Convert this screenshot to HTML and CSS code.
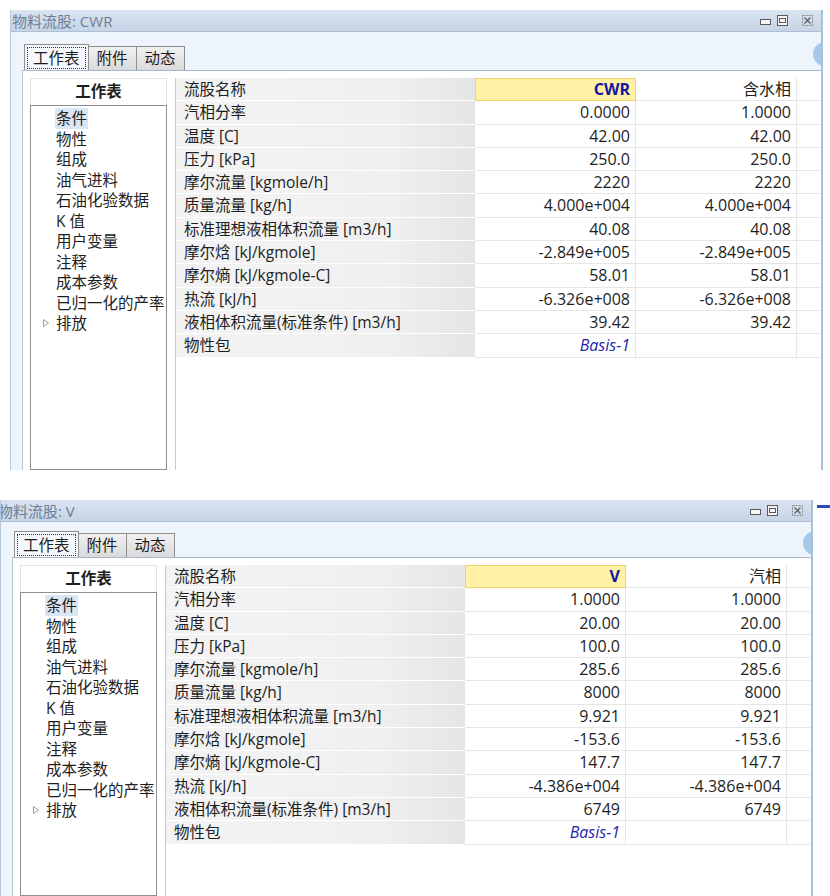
FILE: index.html
```html
<!DOCTYPE html>
<html lang="zh-CN">
<head>
<meta charset="utf-8">
<title>物料流股</title>
<link rel="stylesheet" href="styles.css">
</head>
<body>
<section class="window win-cwr">
  <header class="titlebar">
    <span class="title">物料流股: CWR</span>
    <div class="controls">
      <svg class="ctl ctl-min" width="11" height="11" viewBox="0 0 11 11"><rect x="0.5" y="4.5" width="10" height="5" fill="#f6f6f6" stroke="#5a5a5a"/></svg>
      <svg class="ctl ctl-max" width="11" height="11" viewBox="0 0 11 11"><rect x="0.5" y="0.5" width="10" height="10" fill="#f6f6f6" stroke="#5a5a5a"/><rect x="2.5" y="3.5" width="6" height="4" fill="none" stroke="#5a5a5a"/></svg>
      <svg class="ctl ctl-close" width="11" height="11" viewBox="0 0 11 11"><rect x="0.5" y="0.5" width="10" height="10" fill="none" stroke="#8a8a8a" stroke-dasharray="2 1"/><path d="M2.5 2.5l6 6M8.5 2.5l-6 6" stroke="#5a5a5a" stroke-width="1.2"/></svg>
    </div>
  </header>
  <div class="strip">
    <div class="tabs">
      <div class="tab active"><span class="focus">工作表</span></div>
      <div class="tab">附件</div>
      <div class="tab">动态</div>
    </div>
    <span class="orb"></span>
  </div>
  <div class="content">
    <div class="tree">
      <div class="tree-head">工作表</div>
      <ul class="tree-list">
        <li><span class="sel">条件</span></li>
        <li>物性</li>
        <li>组成</li>
        <li>油气进料</li>
        <li>石油化验数据</li>
        <li>K 值</li>
        <li>用户变量</li>
        <li>注释</li>
        <li>成本参数</li>
        <li>已归一化的产率</li>
        <li class="branch"><svg class="caret" width="8" height="10" viewBox="0 0 8 10"><path d="M1.5 1.5l5 3.5-5 3.5z" fill="#fff" stroke="#a0a0a0"/></svg>排放</li>
      </ul>
    </div>
    <div class="sheet">
      <div class="lab">流股名称</div><div class="val head">CWR</div><div class="val">含水相</div><div class="pad"></div>
      <div class="lab">汽相分率</div><div class="val">0.0000</div><div class="val">1.0000</div><div class="pad"></div>
      <div class="lab">温度 [C]</div><div class="val">42.00</div><div class="val">42.00</div><div class="pad"></div>
      <div class="lab">压力 [kPa]</div><div class="val">250.0</div><div class="val">250.0</div><div class="pad"></div>
      <div class="lab">摩尔流量 [kgmole/h]</div><div class="val">2220</div><div class="val">2220</div><div class="pad"></div>
      <div class="lab">质量流量 [kg/h]</div><div class="val">4.000e+004</div><div class="val">4.000e+004</div><div class="pad"></div>
      <div class="lab">标准理想液相体积流量 [m3/h]</div><div class="val">40.08</div><div class="val">40.08</div><div class="pad"></div>
      <div class="lab">摩尔焓 [kJ/kgmole]</div><div class="val">-2.849e+005</div><div class="val">-2.849e+005</div><div class="pad"></div>
      <div class="lab">摩尔熵 [kJ/kgmole-C]</div><div class="val">58.01</div><div class="val">58.01</div><div class="pad"></div>
      <div class="lab">热流 [kJ/h]</div><div class="val">-6.326e+008</div><div class="val">-6.326e+008</div><div class="pad"></div>
      <div class="lab">液相体积流量(标准条件) [m3/h]</div><div class="val">39.42</div><div class="val">39.42</div><div class="pad"></div>
      <div class="lab">物性包</div><div class="val link">Basis-1</div><div class="val"></div><div class="pad"></div>
    </div>
  </div>
</section>

<section class="window win-v">
  <header class="titlebar">
    <span class="title">物料流股: V</span>
    <div class="controls">
      <svg class="ctl ctl-min" width="11" height="11" viewBox="0 0 11 11"><rect x="0.5" y="4.5" width="10" height="5" fill="#f6f6f6" stroke="#5a5a5a"/></svg>
      <svg class="ctl ctl-max" width="11" height="11" viewBox="0 0 11 11"><rect x="0.5" y="0.5" width="10" height="10" fill="#f6f6f6" stroke="#5a5a5a"/><rect x="2.5" y="3.5" width="6" height="4" fill="none" stroke="#5a5a5a"/></svg>
      <svg class="ctl ctl-close" width="11" height="11" viewBox="0 0 11 11"><rect x="0.5" y="0.5" width="10" height="10" fill="none" stroke="#8a8a8a" stroke-dasharray="2 1"/><path d="M2.5 2.5l6 6M8.5 2.5l-6 6" stroke="#5a5a5a" stroke-width="1.2"/></svg>
    </div>
  </header>
  <div class="strip">
    <div class="tabs">
      <div class="tab active"><span class="focus">工作表</span></div>
      <div class="tab">附件</div>
      <div class="tab">动态</div>
    </div>
    <span class="orb"></span>
  </div>
  <div class="content">
    <div class="tree">
      <div class="tree-head">工作表</div>
      <ul class="tree-list">
        <li><span class="sel">条件</span></li>
        <li>物性</li>
        <li>组成</li>
        <li>油气进料</li>
        <li>石油化验数据</li>
        <li>K 值</li>
        <li>用户变量</li>
        <li>注释</li>
        <li>成本参数</li>
        <li>已归一化的产率</li>
        <li class="branch"><svg class="caret" width="8" height="10" viewBox="0 0 8 10"><path d="M1.5 1.5l5 3.5-5 3.5z" fill="#fff" stroke="#a0a0a0"/></svg>排放</li>
      </ul>
    </div>
    <div class="sheet">
      <div class="lab">流股名称</div><div class="val head">V</div><div class="val">汽相</div><div class="pad"></div>
      <div class="lab">汽相分率</div><div class="val">1.0000</div><div class="val">1.0000</div><div class="pad"></div>
      <div class="lab">温度 [C]</div><div class="val">20.00</div><div class="val">20.00</div><div class="pad"></div>
      <div class="lab">压力 [kPa]</div><div class="val">100.0</div><div class="val">100.0</div><div class="pad"></div>
      <div class="lab">摩尔流量 [kgmole/h]</div><div class="val">285.6</div><div class="val">285.6</div><div class="pad"></div>
      <div class="lab">质量流量 [kg/h]</div><div class="val">8000</div><div class="val">8000</div><div class="pad"></div>
      <div class="lab">标准理想液相体积流量 [m3/h]</div><div class="val">9.921</div><div class="val">9.921</div><div class="pad"></div>
      <div class="lab">摩尔焓 [kJ/kgmole]</div><div class="val">-153.6</div><div class="val">-153.6</div><div class="pad"></div>
      <div class="lab">摩尔熵 [kJ/kgmole-C]</div><div class="val">147.7</div><div class="val">147.7</div><div class="pad"></div>
      <div class="lab">热流 [kJ/h]</div><div class="val">-4.386e+004</div><div class="val">-4.386e+004</div><div class="pad"></div>
      <div class="lab">液相体积流量(标准条件) [m3/h]</div><div class="val">6749</div><div class="val">6749</div><div class="pad"></div>
      <div class="lab">物性包</div><div class="val link">Basis-1</div><div class="val"></div><div class="pad"></div>
    </div>
  </div>
</section>

<span class="edge-mark"></span>
</body>
</html>
```

FILE: styles.css
```css
* { box-sizing: border-box; }

body {
  margin: 0;
  width: 830px;
  height: 896px;
  overflow: hidden;
  position: relative;
  background: #ffffff;
  font-family: "Open Sans", "Noto Sans CJK SC", sans-serif;
  color: #1e1e1e;
}

.window {
  position: relative;
  width: 813px;
  height: 460px;
  margin: 10px 0 0 10px;
  display: flex;
  flex-direction: column;
  overflow: hidden;
  background: #eef4fb;
  border-left: 1px solid #b7c8dc;
  border-right: 2px solid #a9c0dc;
}

.win-v {
  margin: 30px 0 0 0;
  height: 396px;
}

.titlebar {
  flex: none;
  height: 22px;
  display: flex;
  align-items: center;
  justify-content: space-between;
  background: linear-gradient(#d9e4f1, #c6d4e6);
  border-bottom: 1px solid #aebfd4;
}

.title {
  font-size: 15px;
  color: #6c7e95;
  padding-left: 1px;
  line-height: 22px;
  white-space: nowrap;
}

.win-v .title { margin-left: -4px; }

.controls {
  display: flex;
  align-items: center;
  padding-right: 8px;
}

.ctl { display: block; }
.ctl-max { margin-left: 6px; }
.ctl-close { margin-left: 14px; }

.strip {
  position: relative;
  flex: none;
  height: 38px;
  display: flex;
  align-items: flex-end;
  padding-left: 13px;
}

.win-v .strip { height: 35px; }

.tabs {
  display: flex;
  align-items: flex-end;
}

.tab {
  height: 24px;
  padding: 0 8px;
  margin-left: -1px;
  border: 1px solid #8f8f8f;
  border-bottom: none;
  background: linear-gradient(#f1f1f1, #dadada);
  font-size: 15.5px;
  line-height: 22px;
  white-space: nowrap;
}

.tab.active {
  margin-left: 0;
  height: 26px;
  padding: 2px 2px 0;
  background: #f5f8fc;
  position: relative;
  z-index: 1;
}

.focus {
  display: block;
  padding: 0 5px;
  line-height: 20px;
  border: 1px dotted #333;
}

.orb {
  position: absolute;
  right: -16px;
  top: 10px;
  width: 24px;
  height: 24px;
  border-radius: 50%;
  background: #a6c9e9;
}

.win-v .orb { top: 9px; }

.content {
  flex: 1;
  min-height: 0;
  display: flex;
  gap: 8px;
  margin-left: 11px;
  padding: 7px 0 0 7px;
  background: #ffffff;
  border-top: 1px solid #a6b7cb;
  border-left: 1px solid #b9c5d3;
}

.tree {
  flex: none;
  width: 137px;
  display: flex;
  flex-direction: column;
}

.tree-head {
  flex: none;
  height: 27px;
  border: 1px solid #e3e3e3;
  border-bottom: none;
  text-align: center;
  font-weight: bold;
  font-size: 15.5px;
  line-height: 25px;
}

.tree-list {
  flex: 1;
  margin: 0;
  padding: 2px 0 0;
  list-style: none;
  border: 1px solid #8c8e92;
}

.tree-list li {
  height: 20.5px;
  line-height: 20.5px;
  padding-left: 25px;
  font-size: 15.5px;
  white-space: nowrap;
  display: flex;
  align-items: center;
}

.tree-list .sel {
  background: #dbe6f4;
  padding: 0 1px;
  margin-left: -1px;
}

.tree-list .branch { padding-left: 11px; }

.caret {
  display: block;
  margin-right: 6px;
}

.sheet {
  flex: 1;
  display: grid;
  grid-template-columns: 299px 161px 161px 1fr;
  grid-auto-rows: 23.3px;
  align-content: start;
  border-left: 1px solid #bccbdd;
}

.lab {
  padding-left: 8px;
  font-size: 15.5px;
  line-height: 22px;
  white-space: nowrap;
  background: linear-gradient(to right, #f3f3f3, #f0f0f0 70%, #e5e5e5);
  border-bottom: 1px solid #ffffff;
}

.val {
  text-align: right;
  padding-right: 5px;
  font-size: 16px;
  line-height: 22px;
  white-space: nowrap;
  border-right: 1px solid #e6e6e6;
  border-bottom: 1px solid #e6e6e6;
}

.val.head {
  background: #fff1a6;
  border: 1px solid #f1d36a;
  color: #1616a3;
  font-weight: bold;
  line-height: 20px;
}

.val.link {
  color: #2424b0;
  font-style: italic;
}

.pad {
  border-bottom: 1px solid #e6e6e6;
}

.edge-mark {
  position: absolute;
  left: 817px;
  top: 505px;
  width: 13px;
  height: 3px;
  background: #2b48c4;
}
```
